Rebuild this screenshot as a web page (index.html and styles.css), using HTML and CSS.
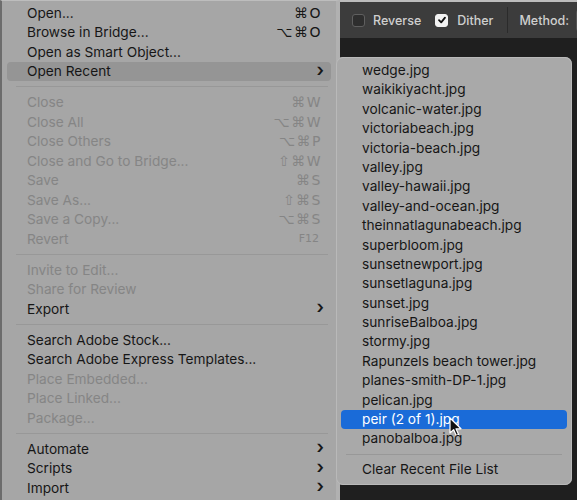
FILE: index.html
```html
<!DOCTYPE html>
<html lang="en">
<head>
    <meta charset="UTF-8">
    <title>File menu - Open Recent</title>
    <link rel="stylesheet" href="styles.css">
</head>
<body>
    <div class="screen">
        <ul class="menu">
            <li class="item"><span>Open...</span><span class="key">⌘O</span></li>
            <li class="item"><span>Browse in Bridge...</span><span class="key">⌥⌘O</span></li>
            <li class="item"><span>Open as Smart Object...</span></li>
            <li class="item hover"><span>Open Recent</span><span class="arrow">›</span></li>
            <li class="sep"></li>
            <li class="item off"><span>Close</span><span class="key">⌘W</span></li>
            <li class="item off"><span>Close All</span><span class="key">⌥⌘W</span></li>
            <li class="item off"><span>Close Others</span><span class="key">⌥⌘P</span></li>
            <li class="item off"><span>Close and Go to Bridge...</span><span class="key">⇧⌘W</span></li>
            <li class="item off"><span>Save</span><span class="key">⌘S</span></li>
            <li class="item off"><span>Save As...</span><span class="key">⇧⌘S</span></li>
            <li class="item off"><span>Save a Copy...</span><span class="key">⌥⌘S</span></li>
            <li class="item off"><span>Revert</span><span class="key small">F12</span></li>
            <li class="sep"></li>
            <li class="item off"><span>Invite to Edit...</span></li>
            <li class="item off"><span>Share for Review</span></li>
            <li class="item"><span>Export</span><span class="arrow">›</span></li>
            <li class="sep"></li>
            <li class="item"><span>Search Adobe Stock...</span></li>
            <li class="item"><span>Search Adobe Express Templates...</span></li>
            <li class="item off"><span>Place Embedded...</span></li>
            <li class="item off"><span>Place Linked...</span></li>
            <li class="item off"><span>Package...</span></li>
            <li class="sep"></li>
            <li class="item"><span>Automate</span><span class="arrow">›</span></li>
            <li class="item"><span>Scripts</span><span class="arrow">›</span></li>
            <li class="item"><span>Import</span><span class="arrow">›</span></li>
        </ul>

        <div class="side">
            <div class="toolbar">
                <label class="check"><span class="box"></span>Reverse</label>
                <label class="check"><span class="box on">
                    <svg width="10" height="10" viewBox="0 0 10 10"><path d="M2 5.2 L4.2 7.4 L8 2.6" fill="none" stroke="#111" stroke-width="1.8" stroke-linecap="round" stroke-linejoin="round"/></svg>
                </span>Dither</label>
                <span class="divider"></span>
                <span class="field-label">Method:</span>
                <span class="select">Sm</span>
            </div>
            <div class="canvas">
                <ul class="submenu">
                    <li class="file">wedge.jpg</li>
                    <li class="file">waikikiyacht.jpg</li>
                    <li class="file">volcanic-water.jpg</li>
                    <li class="file">victoriabeach.jpg</li>
                    <li class="file">victoria-beach.jpg</li>
                    <li class="file">valley.jpg</li>
                    <li class="file">valley-hawaii.jpg</li>
                    <li class="file">valley-and-ocean.jpg</li>
                    <li class="file">theinnatlagunabeach.jpg</li>
                    <li class="file">superbloom.jpg</li>
                    <li class="file">sunsetnewport.jpg</li>
                    <li class="file">sunsetlaguna.jpg</li>
                    <li class="file">sunset.jpg</li>
                    <li class="file">sunriseBalboa.jpg</li>
                    <li class="file">stormy.jpg</li>
                    <li class="file">Rapunzels beach tower.jpg</li>
                    <li class="file">planes-smith-DP-1.jpg</li>
                    <li class="file">pelican.jpg</li>
                    <li class="file selected">peir (2 of 1).jpg
                        <svg class="cursor" width="14" height="21" viewBox="0 0 14 21">
                            <path d="M1 1 L1 16 L4.6 12.6 L7.2 18.6 L9.6 17.6 L7 11.8 L12 11.8 Z" fill="#111" stroke="#fff" stroke-width="1.2" stroke-linejoin="round"/>
                        </svg>
                    </li>
                    <li class="file">panobalboa.jpg</li>
                    <li class="sep"></li>
                    <li class="file">Clear Recent File List</li>
                </ul>
            </div>
        </div>
    </div>
</body>
</html>
```

FILE: styles.css
```css
body {
    margin: 0;
    background: #1f1f1f;
    font-family: Inter, "Noto Sans", sans-serif;
    font-size: 13.7px;
    color: #161616;
}

ul {
    list-style: none;
    margin: 0;
    padding: 0;
}

.screen {
    display: flex;
    width: 577px;
    height: 500px;
    overflow: hidden;
}

.menu {
    width: 334px;
    flex-shrink: 0;
    padding-top: 2px;
    background: #a6a6a6;
    border-left: 2px solid #6c6c6c;
    border-right: 4px solid #b1b1b1;
    border-top: 1px solid #bdbdbd;
}

.item {
    display: flex;
    align-items: center;
    justify-content: space-between;
    height: 19.5px;
    margin: 0 5px;
    padding: 0 7px 0 20px;
    border-radius: 4px;
    white-space: nowrap;
}

.item.hover {
    background: #959595;
}

.item.off {
    color: #858585;
}

.key {
    font-family: "DejaVu Sans", sans-serif;
    font-size: 14px;
    letter-spacing: 1.5px;
    padding-right: 2px;
}

.key.small {
    font-size: 11px;
    letter-spacing: 0;
    padding-right: 5px;
}

.arrow {
    font-size: 18px;
    font-weight: 600;
    line-height: 1;
    margin-top: -3px;
}

.sep {
    height: 1px;
    margin: 5px 8px 5.5px 14px;
    background: #989898;
}

.side {
    flex: 1;
    display: flex;
    flex-direction: column;
}

.toolbar {
    height: 36px;
    display: flex;
    align-items: center;
    padding-left: 12px;
    background: #3c3c3c;
    border-top: 2px solid #bcbcbc;
    color: #cfcfcf;
    font-size: 12.5px;
    font-weight: 500;
    white-space: nowrap;
}

.check {
    display: flex;
    align-items: center;
    margin-right: 14px;
}

.box {
    width: 11px;
    height: 11px;
    margin-right: 8px;
    border: 1px solid #5f5f5f;
    border-radius: 3px;
    background: #2e2e2e;
    display: flex;
    align-items: center;
    justify-content: center;
}

.box.on {
    background: #f2f2f2;
    border-color: #f2f2f2;
    margin-right: 9px;
}

.divider {
    width: 1px;
    height: 26px;
    background: #2b2b2b;
    margin: 0 11px 0 0;
}

.field-label {
    margin-right: 7px;
}

.select {
    height: 19px;
    padding: 0 10px 0 7px;
    border: 1px solid #555;
    border-right: none;
    border-radius: 3px 0 0 3px;
    background: #323232;
    color: #f0f0f0;
    line-height: 19px;
    font-size: 13px;
}

.canvas {
    flex: 1;
    padding-top: 19px;
}

.submenu {
    width: 236px;
    margin-left: -4px;
    padding: 4px 0 6px;
    background: #a9a9a9;
    border-radius: 7px;
    box-shadow: inset 0 0 0 1px #b9b9b9;
}

.file {
    position: relative;
    height: 19.4px;
    line-height: 19.4px;
    margin: 0 5px;
    padding-left: 21px;
    border-radius: 4px;
    white-space: nowrap;
}

.file.selected {
    background: #1a6bd8;
    color: #fff;
}

.submenu .sep {
    margin: 5px 10px 5px 10px;
}

.cursor {
    position: absolute;
    left: 108px;
    top: 7px;
}
```
